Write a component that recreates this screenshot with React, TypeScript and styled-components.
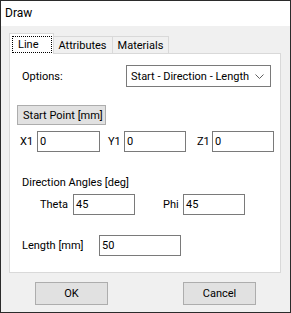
import React from "react";
import styled, { createGlobalStyle } from "styled-components";

const Global = createGlobalStyle`
  html, body { margin: 0; padding: 0; background: #ffffff; }
  * { box-sizing: border-box; }
  body { font-family: Roboto, "Noto Sans", sans-serif; font-size: 11px; color: #000; }
`;

const Window = styled.div`
  width: 291px;
  height: 313px;
  border: 1px solid #2b2b2b;
  background: #f0f0f0;
  display: flex;
  flex-direction: column;
`;

const TitleBar = styled.div`
  height: 25px;
  background: #ffffff;
  display: flex;
  align-items: center;
  padding: 0 0 1px 4px;
  font-size: 12px;
`;

const Body = styled.div`
  padding: 7px 9px 0 8px;
  display: flex;
  flex-direction: column;
`;

const TabStrip = styled.div`
  display: flex;
  align-items: flex-end;
  height: 21px;
  position: relative;
  z-index: 1;
  margin-bottom: -1px;
`;

const Tab = styled.div<{ $active?: boolean }>`
  height: ${(p) => (p.$active ? "21px" : "18px")};
  padding: ${(p) => (p.$active ? "2px 1px 0 2px" : "0 5px 0 5px")};
  margin-left: ${(p) => (p.$active ? "0" : "-1px")};
  background: ${(p) => (p.$active ? "#ffffff" : "#f0f0f0")};
  border: 1px solid #d9d9d9;
  border-bottom: ${(p) => (p.$active ? "none" : "1px solid #d9d9d9")};
  display: flex;
  align-items: ${(p) => (p.$active ? "flex-start" : "center")};
  &:first-child { margin-left: 0; }
`;

const FocusLabel = styled.span`
  border: 1px dotted #000;
  padding: 0 12px 0 5px;
  height: 17px;
  display: flex;
  align-items: center;
`;

const Panel = styled.div`
  height: 220px;
  background: #ffffff;
  border: 1px solid #d9d9d9;
  display: flex;
  flex-direction: column;
  padding: 11px 0 0 11px;
`;

const Row = styled.div<{ $mt?: number }>`
  display: flex;
  align-items: center;
  margin-top: ${(p) => p.$mt ?? 0}px;
`;

const Label = styled.span<{ $w?: number; $ml?: number }>`
  width: ${(p) => (p.$w ? `${p.$w}px` : "auto")};
  margin-left: ${(p) => p.$ml ?? 0}px;
  white-space: nowrap;
`;

const Select = styled.div`
  width: 145px;
  height: 22px;
  border: 1px solid #7a7a7a;
  display: flex;
  align-items: center;
  justify-content: space-between;
  padding: 0 6px 0 4px;
  white-space: nowrap;
`;

const GroupButton = styled.div`
  margin-left: -4px;
  width: 89px;
  height: 20px;
  background: #e1e1e1;
  border: 1px solid #adadad;
  display: flex;
  align-items: center;
  padding-left: 5px;
  white-space: nowrap;
`;

const Input = styled.div<{ $w: number; $ml?: number }>`
  width: ${(p) => p.$w}px;
  height: 21px;
  margin-left: ${(p) => p.$ml ?? 0}px;
  border: 1px solid #7a7a7a;
  display: flex;
  align-items: center;
  padding-left: 2px;
`;

const Footer = styled.div`
  display: flex;
  justify-content: space-between;
  padding: 9px 25px 0 26px;
`;

const Button = styled.div`
  width: 73px;
  height: 23px;
  background: #e1e1e1;
  border: 1px solid #adadad;
  display: flex;
  align-items: center;
  justify-content: center;
`;

const Chevron = () => (
  <svg width="9" height="5" viewBox="0 0 9 5">
    <path d="M0.5 0.5 L4.5 4.5 L8.5 0.5" fill="none" stroke="#606060" strokeWidth="1" />
  </svg>
);

export default function App() {
  return (
    <>
      <Global />
      <Window>
        <TitleBar>Draw</TitleBar>
        <Body>
          <TabStrip>
            <Tab $active>
              <FocusLabel>Line</FocusLabel>
            </Tab>
            <Tab>Attributes</Tab>
            <Tab>Materials</Tab>
          </TabStrip>
          <Panel>
            <Row>
              <Label $w={104} $ml={1}>Options:</Label>
              <Select>
                <span>Start - Direction - Length</span>
                <Chevron />
              </Select>
            </Row>
            <Row $mt={18}>
              <GroupButton>Start Point [mm]</GroupButton>
            </Row>
            <Row $mt={6}>
              <Label $w={17} $ml={-1}>X1</Label>
              <Input $w={63}>0</Input>
              <Label $w={16} $ml={8}>Y1</Label>
              <Input $w={62}>0</Input>
              <Label $w={15} $ml={11}>Z1</Label>
              <Input $w={62}>0</Input>
            </Row>
            <Row $mt={24}>
              <Label $ml={1}>Direction Angles [deg]</Label>
            </Row>
            <Row $mt={5}>
              <Label $w={33} $ml={19}>Theta</Label>
              <Input $w={62}>45</Input>
              <Label $w={20} $ml={28}>Phi</Label>
              <Input $w={62}>45</Input>
            </Row>
            <Row $mt={20}>
              <Label $w={77} $ml={1}>Length [mm]</Label>
              <Input $w={82}>50</Input>
            </Row>
          </Panel>
          <Footer>
            <Button>OK</Button>
            <Button>Cancel</Button>
          </Footer>
        </Body>
      </Window>
    </>
  );
}
